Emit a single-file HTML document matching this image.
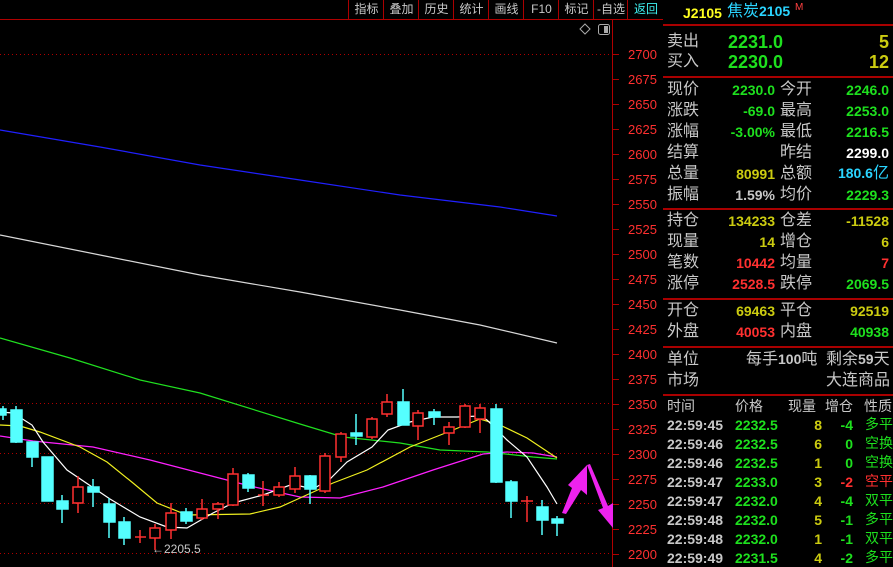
<!DOCTYPE html>
<html><head><meta charset="utf-8"><style>
body{margin:0;background:#000;width:893px;height:567px;overflow:hidden;position:relative;font-family:"Liberation Sans","Noto Sans CJK SC",sans-serif;}
.a{position:absolute;white-space:nowrap;line-height:1;}
.tb{position:absolute;top:0;height:19px;color:#c8c8c8;font-size:12px;line-height:18px;text-align:center;border-left:1px solid #a00;}
.l{position:absolute;left:667px;font-size:16px;color:#c8c8c8;line-height:1;white-space:nowrap;}
.l2{position:absolute;left:780px;font-size:16px;color:#c8c8c8;line-height:1;white-space:nowrap;}
.v{position:absolute;right:118px;font-size:14px;font-weight:bold;line-height:1;text-align:right;white-space:nowrap;}
.v2{position:absolute;right:4px;font-size:14px;font-weight:bold;line-height:1;text-align:right;white-space:nowrap;}
.hl{position:absolute;left:663px;width:230px;height:2px;background:#a00;}
.g{color:#1ee01e}.y{color:#cccc10}.r{color:#ff3030}.w{color:#fff}.c{color:#2ad4ff}.s{color:#c8c8c8}
.t{position:absolute;font-size:14px;font-weight:bold;line-height:1;white-space:nowrap;}
</style></head><body>
<div class="a" style="left:0;top:19px;width:663px;height:1px;background:#b00000"></div>
<div class="tb" style="left:348px;width:35px">指标</div>
<div class="tb" style="left:383px;width:35px">叠加</div>
<div class="tb" style="left:418px;width:35px">历史</div>
<div class="tb" style="left:453px;width:35px">统计</div>
<div class="tb" style="left:488px;width:35px">画线</div>
<div class="tb" style="left:523px;width:35px">F10</div>
<div class="tb" style="left:558px;width:35px">标记</div>
<div class="tb" style="left:593px;width:34px">-自选</div>
<div class="tb" style="left:627px;width:36px;color:#3ef0f0">返回</div>
<svg style="position:absolute;left:0;top:0" width="663" height="567">
<g stroke="#b00000" stroke-width="1" stroke-dasharray="1,3">
<line x1="0" y1="54.5" x2="612" y2="54.5"/><line x1="0" y1="403.5" x2="612" y2="403.5"/><line x1="0" y1="453.5" x2="612" y2="453.5"/><line x1="0" y1="503.5" x2="612" y2="503.5"/><line x1="0" y1="553.5" x2="612" y2="553.5"/>
</g>
<line x1="612.5" y1="20" x2="612.5" y2="567" stroke="#b00000"/>
<line x1="663.5" y1="0" x2="663.5" y2="567" stroke="#b00000"/>
<g stroke="#b00000"><line x1="613" y1="54.5" x2="619" y2="54.5"/><line x1="613" y1="79.5" x2="619" y2="79.5"/><line x1="613" y1="104.5" x2="619" y2="104.5"/><line x1="613" y1="129.5" x2="619" y2="129.5"/><line x1="613" y1="154.5" x2="619" y2="154.5"/><line x1="613" y1="179.5" x2="619" y2="179.5"/><line x1="613" y1="204.5" x2="619" y2="204.5"/><line x1="613" y1="229.5" x2="619" y2="229.5"/><line x1="613" y1="254.5" x2="619" y2="254.5"/><line x1="613" y1="279.5" x2="619" y2="279.5"/><line x1="613" y1="304.5" x2="619" y2="304.5"/><line x1="613" y1="329.5" x2="619" y2="329.5"/><line x1="613" y1="354.5" x2="619" y2="354.5"/><line x1="613" y1="379.5" x2="619" y2="379.5"/><line x1="613" y1="404.5" x2="619" y2="404.5"/><line x1="613" y1="429.5" x2="619" y2="429.5"/><line x1="613" y1="454.5" x2="619" y2="454.5"/><line x1="613" y1="479.5" x2="619" y2="479.5"/><line x1="613" y1="504.5" x2="619" y2="504.5"/><line x1="613" y1="529.5" x2="619" y2="529.5"/><line x1="613" y1="554.5" x2="619" y2="554.5"/></g>
<g fill="#ff3030" font-size="13" font-family="Liberation Sans">
<text x="628" y="59">2700</text><text x="628" y="84">2675</text><text x="628" y="109">2650</text><text x="628" y="134">2625</text><text x="628" y="159">2600</text><text x="628" y="184">2575</text><text x="628" y="209">2550</text><text x="628" y="234">2525</text><text x="628" y="259">2500</text><text x="628" y="284">2475</text><text x="628" y="309">2450</text><text x="628" y="334">2425</text><text x="628" y="359">2400</text><text x="628" y="384">2375</text><text x="628" y="409">2350</text><text x="628" y="434">2325</text><text x="628" y="459">2300</text><text x="628" y="484">2275</text><text x="628" y="509">2250</text><text x="628" y="534">2225</text><text x="628" y="559">2200</text>
</g>
<path d="M585 24 L590 29 L585 34 L580 29 Z" fill="none" stroke="#aaa"/>
<rect x="598.5" y="24.5" width="11" height="10" rx="2" fill="none" stroke="#aaa"/><rect x="604" y="26" width="4" height="7" fill="#aaa"/>
<g fill="none" stroke-width="1.2">
<polyline stroke="#2020ff" points="0,130 100,147 200,165 300,180 400,195 500,207 557,216"/>
<polyline stroke="#d8d8d8" points="0,235 100,255 200,275 300,292 400,310 480,325 557,343"/>
<polyline stroke="#20e020" points="0,338 70,358 140,380 200,393 300,424 343,437 400,443 440,450 487,452 533,457 557,459"/>
<polyline stroke="#ff20ff" points="0,436 33,441 93,447 150,460 200,473 250,486 300,497 340,498 383,487 433,470 483,454 507,452 533,453 557,457"/>
<polyline stroke="#f0f020" points="0,425 20,426 40,432 80,447 107,462 133,483 157,503 187,515 250,514 280,507 300,498 333,483 367,470 410,447 453,430 480,419 500,425 527,438 557,458"/>
<polyline stroke="#ffffff" points="0,412 13,413 32,425 43,442 67,470 110,499 140,517 167,527 187,528 213,513 233,503 263,495 293,484 300,486 313,489 330,479 347,462 372,447 388,430 410,422 433,417 457,417 480,416 487,420 507,440 527,457 547,487 557,504"/>
</g>
<g stroke-width="1.5">
<g stroke="#55ffff" fill="#55ffff">
<line x1="3" y1="406" x2="3" y2="420"/><rect x="0" y="409" width="6" height="6"/>
<line x1="16" y1="406" x2="16" y2="443"/><rect x="11" y="410" width="11" height="32"/>
<line x1="32" y1="442" x2="32" y2="467"/><rect x="27" y="442" width="11" height="15"/>
<line x1="47" y1="457" x2="47" y2="501"/><rect x="42" y="457" width="11" height="44"/>
<line x1="62" y1="495" x2="62" y2="523"/><rect x="57" y="501" width="11" height="8"/>
<line x1="93" y1="479" x2="93" y2="507"/><rect x="88" y="487" width="11" height="5"/>
<line x1="109" y1="498" x2="109" y2="538"/><rect x="104" y="504" width="11" height="18"/>
<line x1="124" y1="517" x2="124" y2="545"/><rect x="119" y="522" width="11" height="16"/>
<line x1="186" y1="508" x2="186" y2="524"/><rect x="181" y="512" width="11" height="9"/>
<line x1="248" y1="473" x2="248" y2="492"/><rect x="243" y="475" width="11" height="13"/>
<line x1="310" y1="475" x2="310" y2="504"/><rect x="305" y="476" width="11" height="13"/>
<line x1="356" y1="414" x2="356" y2="445"/><rect x="351" y="433" width="11" height="3"/>
<line x1="403" y1="389" x2="403" y2="425"/><rect x="398" y="402" width="11" height="23"/>
<line x1="434" y1="409" x2="434" y2="425"/><rect x="429" y="412" width="11" height="5"/>
<line x1="496" y1="404" x2="496" y2="483"/><rect x="491" y="409" width="11" height="73"/>
<line x1="511" y1="480" x2="511" y2="518"/><rect x="506" y="482" width="11" height="19"/>
<line x1="542" y1="500" x2="542" y2="535"/><rect x="537" y="507" width="11" height="13"/>
<line x1="557" y1="516" x2="557" y2="536"/><rect x="552" y="519" width="11" height="4"/>
</g>
<g stroke="#ff3030" fill="#000">
<line x1="78" y1="476" x2="78" y2="513"/><rect x="73" y="487" width="10" height="16"/>
<line x1="140" y1="530" x2="140" y2="543"/><line x1="135" y1="537" x2="146" y2="537"/>
<line x1="155" y1="524" x2="155" y2="550"/><rect x="150" y="528" width="10" height="10"/>
<line x1="171" y1="503" x2="171" y2="539"/><rect x="166" y="513" width="10" height="17"/>
<line x1="202" y1="499" x2="202" y2="520"/><rect x="197" y="509" width="10" height="9"/>
<line x1="218" y1="502" x2="218" y2="519"/><rect x="213" y="504" width="10" height="5"/>
<line x1="233" y1="468" x2="233" y2="506"/><rect x="228" y="474" width="10" height="31"/>
<line x1="263" y1="481" x2="263" y2="506"/><line x1="258" y1="495" x2="269" y2="495"/>
<line x1="279" y1="482" x2="279" y2="497"/><rect x="274" y="487" width="10" height="8"/>
<line x1="295" y1="467" x2="295" y2="493"/><rect x="290" y="476" width="10" height="13"/>
<line x1="325" y1="453" x2="325" y2="493"/><rect x="320" y="456" width="10" height="35"/>
<line x1="341" y1="432" x2="341" y2="462"/><rect x="336" y="434" width="10" height="23"/>
<line x1="372" y1="417" x2="372" y2="439"/><rect x="367" y="419" width="10" height="18"/>
<line x1="387" y1="394" x2="387" y2="417"/><rect x="382" y="402" width="10" height="12"/>
<line x1="418" y1="410" x2="418" y2="440"/><rect x="413" y="413" width="10" height="13"/>
<line x1="449" y1="422" x2="449" y2="445"/><rect x="444" y="427" width="10" height="6"/>
<line x1="465" y1="404" x2="465" y2="428"/><rect x="460" y="406" width="10" height="21"/>
<line x1="480" y1="404" x2="480" y2="433"/><rect x="475" y="408" width="10" height="11"/>
<line x1="527" y1="496" x2="527" y2="522"/><line x1="521" y1="501" x2="533" y2="501"/>
</g></g>
<text x="152" y="553" fill="#c8c8c8" font-size="12" font-family="Liberation Sans">←2205.5</text>
<polygon fill="#ee22ee" points="562,513 572,488 568,485 587,465 587,495 581,490 566,514"/>
<polygon fill="#ee22ee" points="587,465 603,508 598,510 613,528 613,503 608,506 590,464"/>
</svg>
<div class="a" style="left:683px;top:6px;font-size:14px;font-weight:bold;color:#ffff20">J2105</div>
<div class="a" style="left:727px;top:4px;font-size:16px;color:#2ad4ff">焦炭<span style="font-size:14px;font-weight:bold">2105</span></div>
<div class="a" style="left:795px;top:3px;font-size:10px;color:#ff4040">M</div>
<div class="hl" style="top:24px"></div>
<div class="l" style="top:34px">卖出</div><div class="t g" style="left:728px;top:33px;font-size:18px">2231.0</div><div class="v2 y" style="top:33px;font-size:18px">5</div>
<div class="l" style="top:54px">买入</div><div class="t g" style="left:728px;top:53px;font-size:18px">2230.0</div><div class="v2 y" style="top:53px;font-size:18px">12</div>
<div class="hl" style="top:76px"></div>
<div class="l" style="top:82px">现价</div><div class="v g" style="top:83px">2230.0</div><div class="l2" style="top:82px">今开</div><div class="v2 g" style="top:83px">2246.0</div>
<div class="l" style="top:103px">涨跌</div><div class="v g" style="top:104px">-69.0</div><div class="l2" style="top:103px">最高</div><div class="v2 g" style="top:104px">2253.0</div>
<div class="l" style="top:124px">涨幅</div><div class="v g" style="top:125px">-3.00%</div><div class="l2" style="top:124px">最低</div><div class="v2 g" style="top:125px">2216.5</div>
<div class="l" style="top:145px">结算</div><div class="l2" style="top:145px">昨结</div><div class="v2 w" style="top:146px">2299.0</div>
<div class="l" style="top:166px">总量</div><div class="v y" style="top:167px">80991</div><div class="l2" style="top:166px">总额</div><div class="v2 c" style="top:166px">180.6<span style="font-weight:normal;font-size:16px">亿</span></div>
<div class="l" style="top:187px">振幅</div><div class="v s" style="top:188px">1.59%</div><div class="l2" style="top:187px">均价</div><div class="v2 g" style="top:188px">2229.3</div>
<div class="hl" style="top:208px"></div>
<div class="l" style="top:213px">持仓</div><div class="v y" style="top:214px">134233</div><div class="l2" style="top:213px">仓差</div><div class="v2 y" style="top:214px">-11528</div>
<div class="l" style="top:234px">现量</div><div class="v y" style="top:235px">14</div><div class="l2" style="top:234px">增仓</div><div class="v2 y" style="top:235px">6</div>
<div class="l" style="top:255px">笔数</div><div class="v r" style="top:256px">10442</div><div class="l2" style="top:255px">均量</div><div class="v2 r" style="top:256px">7</div>
<div class="l" style="top:276px">涨停</div><div class="v r" style="top:277px">2528.5</div><div class="l2" style="top:276px">跌停</div><div class="v2 g" style="top:277px">2069.5</div>
<div class="hl" style="top:298px"></div>
<div class="l" style="top:303px">开仓</div><div class="v y" style="top:304px">69463</div><div class="l2" style="top:303px">平仓</div><div class="v2 y" style="top:304px">92519</div>
<div class="l" style="top:324px">外盘</div><div class="v r" style="top:325px">40053</div><div class="l2" style="top:324px">内盘</div><div class="v2 g" style="top:325px">40938</div>
<div class="hl" style="top:346px"></div>
<div class="l" style="top:352px">单位</div><div class="a s" style="left:746px;top:352px;font-size:16px">每手<b style="font-size:14px">100</b>吨</div><div class="a s" style="left:826px;top:352px;font-size:16px">剩余<b style="font-size:14px">59</b>天</div>
<div class="l" style="top:373px">市场</div><div class="a s" style="left:826px;top:373px;font-size:16px">大连商品</div>
<div class="hl" style="top:394px"></div>
<div class="a s" style="left:667px;top:399px;font-size:14px">时间</div><div class="a s" style="left:735px;top:399px;font-size:14px">价格</div><div class="a s" style="left:788px;top:399px;font-size:14px">现量</div><div class="a s" style="left:825px;top:399px;font-size:14px">增仓</div><div class="a s" style="left:864px;top:399px;font-size:14px">性质</div>
<div style="position:absolute;left:0;top:418px;width:893px">
<div class="t s" style="left:667px;top:0">22:59:45</div><div class="t g" style="left:735px;top:0">2232.5</div><div class="t y" style="right:71px;top:0">8</div><div class="t g" style="right:40px;top:0">-4</div><div class="t g" style="left:865px;top:-1px;font-weight:normal">多平</div>
<div class="t s" style="left:667px;top:19px">22:59:46</div><div class="t g" style="left:735px;top:19px">2232.5</div><div class="t y" style="right:71px;top:19px">6</div><div class="t g" style="right:40px;top:19px">0</div><div class="t g" style="left:865px;top:18px;font-weight:normal">空换</div>
<div class="t s" style="left:667px;top:38px">22:59:46</div><div class="t g" style="left:735px;top:38px">2232.5</div><div class="t y" style="right:71px;top:38px">1</div><div class="t g" style="right:40px;top:38px">0</div><div class="t g" style="left:865px;top:37px;font-weight:normal">空换</div>
<div class="t s" style="left:667px;top:57px">22:59:47</div><div class="t g" style="left:735px;top:57px">2233.0</div><div class="t y" style="right:71px;top:57px">3</div><div class="t r" style="right:40px;top:57px">-2</div><div class="t r" style="left:865px;top:56px;font-weight:normal">空平</div>
<div class="t s" style="left:667px;top:76px">22:59:47</div><div class="t g" style="left:735px;top:76px">2232.0</div><div class="t y" style="right:71px;top:76px">4</div><div class="t g" style="right:40px;top:76px">-4</div><div class="t g" style="left:865px;top:75px;font-weight:normal">双平</div>
<div class="t s" style="left:667px;top:95px">22:59:48</div><div class="t g" style="left:735px;top:95px">2232.0</div><div class="t y" style="right:71px;top:95px">5</div><div class="t g" style="right:40px;top:95px">-1</div><div class="t g" style="left:865px;top:94px;font-weight:normal">多平</div>
<div class="t s" style="left:667px;top:114px">22:59:48</div><div class="t g" style="left:735px;top:114px">2232.0</div><div class="t y" style="right:71px;top:114px">1</div><div class="t g" style="right:40px;top:114px">-1</div><div class="t g" style="left:865px;top:113px;font-weight:normal">双平</div>
<div class="t s" style="left:667px;top:133px">22:59:49</div><div class="t g" style="left:735px;top:133px">2231.5</div><div class="t y" style="right:71px;top:133px">4</div><div class="t g" style="right:40px;top:133px">-2</div><div class="t g" style="left:865px;top:132px;font-weight:normal">多平</div>
</div>
</body></html>
